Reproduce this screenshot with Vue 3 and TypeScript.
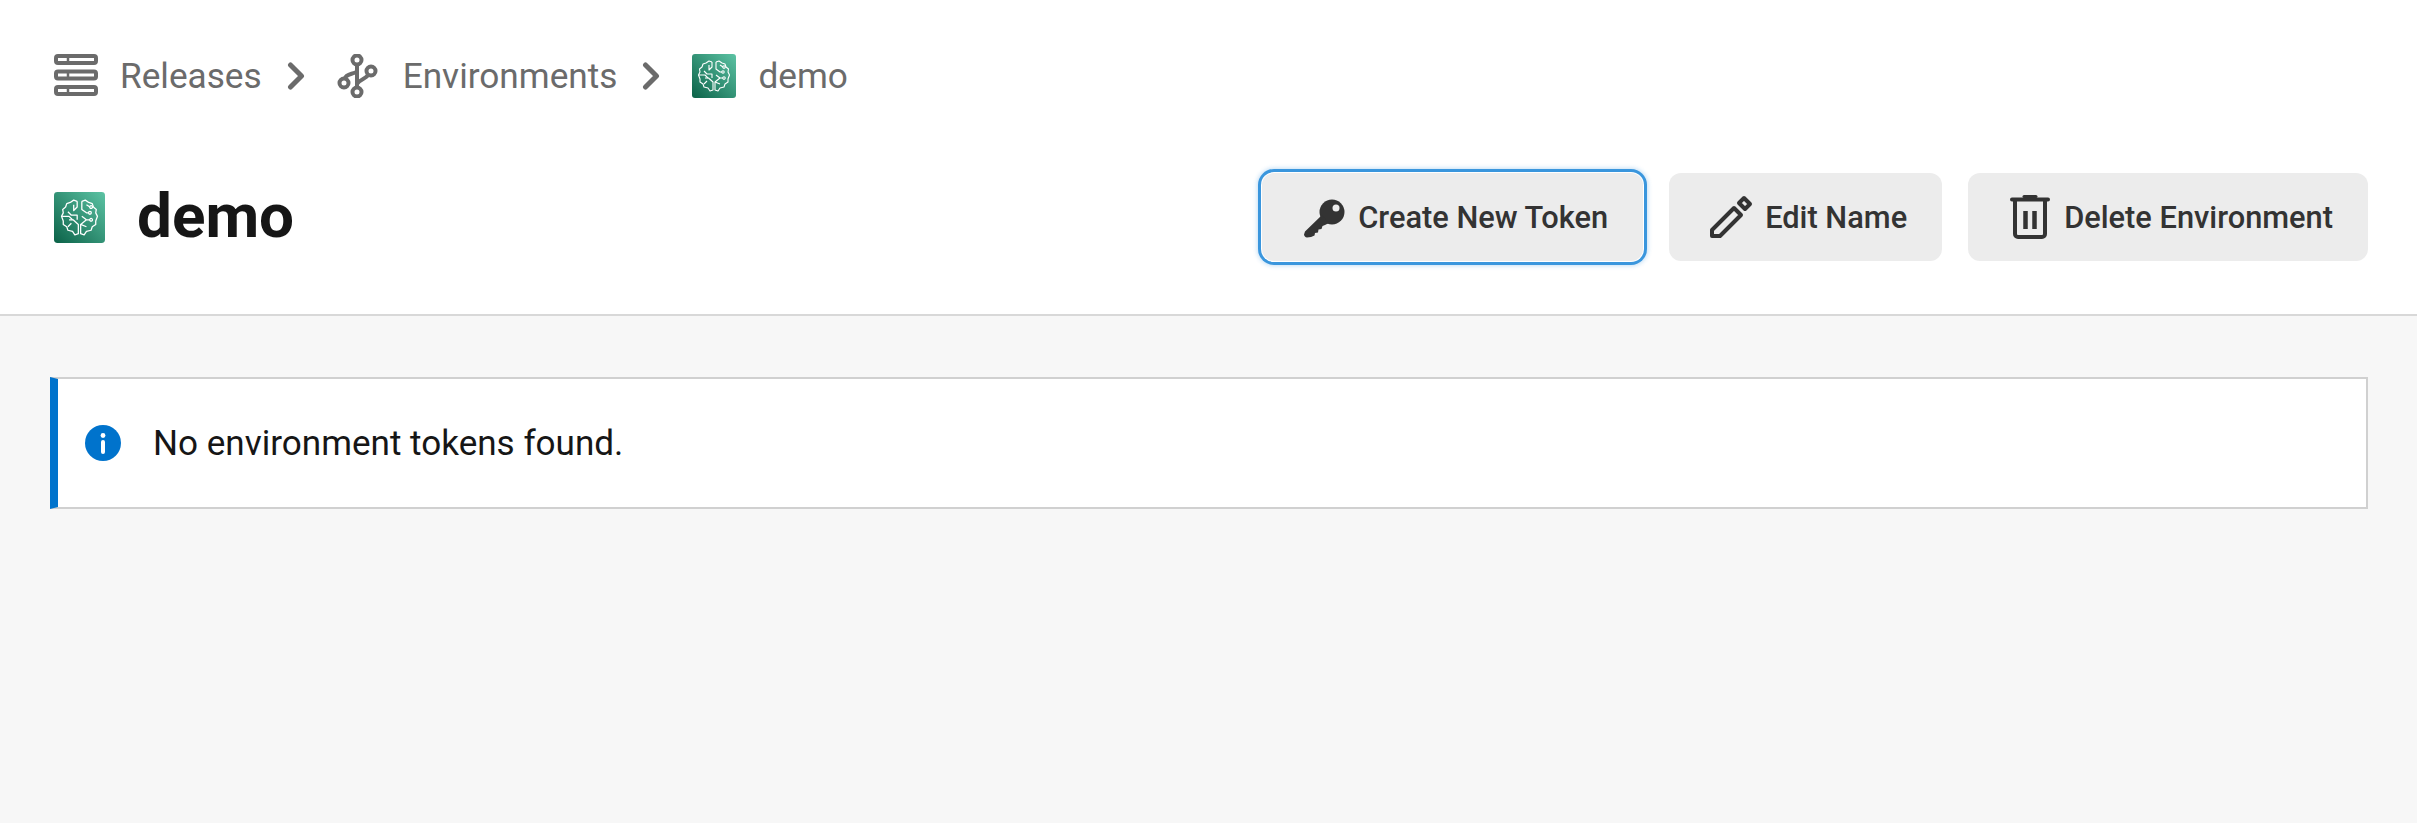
<template>
  <div class="page">
    <header class="head">
      <nav class="crumbs">
        <svg class="crumb-icon" viewBox="0 0 44 44" fill="none" stroke="#6b6b6b" stroke-width="4">
          <rect x="2" y="2" width="40" height="7" rx="2" />
          <rect x="2" y="17.500" width="40" height="7" rx="2" />
          <rect x="2" y="33" width="40" height="7" rx="2" />
          <path d="M14 3v5M14 18.500v5M14 34v5" stroke-width="2.500" />
        </svg>
        <span class="crumb-text">Releases</span>
        <svg class="chevron" viewBox="0 0 18 28" fill="none" stroke="#6b6b6b" stroke-width="5" stroke-linecap="round" stroke-linejoin="round">
          <path d="M3.500 3l11 11-11 11" />
        </svg>
        <svg class="crumb-icon" viewBox="0 0 44 44" fill="none" stroke="#6b6b6b" stroke-width="4">
          <circle cx="20" cy="6" r="4.500" />
          <circle cx="34" cy="17" r="4.500" />
          <circle cx="7" cy="29" r="4.500" />
          <circle cx="20" cy="38" r="4.500" />
          <path d="M20 10.500v23M31 21c-2 4-8 4-11 9M8 24.500c1-5 8-4 12-7" />
        </svg>
        <span class="crumb-text">Environments</span>
        <svg class="chevron" viewBox="0 0 18 28" fill="none" stroke="#6b6b6b" stroke-width="5" stroke-linecap="round" stroke-linejoin="round">
          <path d="M3.500 3l11 11-11 11" />
        </svg>
        <svg class="brain small" viewBox="0 0 44 44">
          <defs>
            <linearGradient id="brainBg" x1="0" y1="1" x2="1" y2="0">
              <stop offset="0" stop-color="#0b6248" />
              <stop offset="1" stop-color="#5cc3a4" />
            </linearGradient>
          </defs>
          <rect width="44" height="44" rx="3" fill="url(#brainBg)" />
          <path v-for="d in brainPaths" :key="d" :d="d" fill="none" stroke="#fff" stroke-width="1.100" stroke-linejoin="round" />
        </svg>
        <span class="crumb-text">demo</span>
      </nav>
      <div class="title-row">
        <div class="title">
          <svg class="brain" viewBox="0 0 44 44">
            <rect width="44" height="44" rx="3" fill="url(#brainBg)" />
            <path v-for="d in brainPaths" :key="d" :d="d" fill="none" stroke="#fff" stroke-width="1.100" stroke-linejoin="round" />
          </svg>
          <h1>demo</h1>
        </div>
        <div class="actions">
          <button class="btn focused" type="button">
            <svg class="btn-icon" viewBox="0 0 44 44">
              <g transform="translate(0 2)">
                <circle cx="30" cy="15" r="12.500" fill="#333" />
                <path fill="#333" d="M20 18l7 8-4 2-2.500 1-1 3-3 .5-.5 3-3 .5-.5 2.500-3.500 1.500-4 .5c-1.500 0-3-1.500-3-3l1-3z" />
                <circle cx="34" cy="11" r="3.500" fill="#ececec" />
              </g>
            </svg>
            Create New Token
          </button>
          <button class="btn" type="button">
            <svg class="btn-icon" viewBox="0 0 44 44" fill="none" stroke="#333" stroke-width="4" stroke-linejoin="round">
              <path d="M3 35L25 13l7 7-21 21H3z" />
              <path d="M35 3l6 6-5 5-6-6z" />
            </svg>
            Edit Name
          </button>
          <button class="btn" type="button">
            <svg class="btn-icon" viewBox="0 0 44 44" fill="none" stroke="#333" stroke-width="4" stroke-linecap="round" stroke-linejoin="round">
              <path d="M16 1.500h12" stroke-width="3" />
              <path d="M4 4.500h36M7 6v33a3 3 0 0 0 3 3h24a3 3 0 0 0 3-3V6" />
              <path d="M17.500 16v18M26.500 16v18" stroke-width="4.500" stroke-linecap="butt" />
            </svg>
            Delete Environment
          </button>
        </div>
      </div>
    </header>
    <main class="content">
      <div class="alert">
        <svg class="info" viewBox="0 0 36 36">
          <circle cx="18" cy="18" r="18" fill="#0073cc" />
          <circle cx="18" cy="10.500" r="2.400" fill="#fff" />
          <rect x="16" y="15" width="4" height="14" rx="2" fill="#fff" />
        </svg>
        <span>{{ message }}</span>
      </div>
    </main>
  </div>
</template>

<script setup lang="ts">
const message = 'No environment tokens found.'

// Контуры значка с мозгом
const brainPaths: string[] = [
  'M20 8l-3-1-3 2-3 1-1 3-2.500 2 .5 3-1.500 3 1.500 4v3l3 2 1 3 4 1 2 3 3-1v-8l-4.500-4H13',
  'M24 8l3-1 3 2 3 1 1 3 2.500 2-.5 3 1.500 3-1.500 4v3l-3 2-1 3-4 1-2 3-3-1v-8l5-4h3',
  'M20 8v5l-3 3v-5M7 21h6l3 3M12 17l3 3h5v4M12 30l3-3',
  'M24 8v7l4 3h2M24 21l4 3M28 11l3 2M28 30l-5-2',
  'M32.200 18a1.200 1.200 0 1 1-2.400 0 1.200 1.200 0 1 1 2.400 0zM33.200 24a1.200 1.200 0 1 1-2.400 0 1.200 1.200 0 1 1 2.400 0zM33.200 13a1.200 1.200 0 1 1-2.400 0 1.200 1.200 0 1 1 2.400 0z',
]
</script>

<style scoped>
.page {
  min-height: 823px;
  display: flex;
  flex-direction: column;
  background-color: #f7f7f7;
  font-family: Roboto, "Liberation Sans", sans-serif;
}

.head {
  background-color: #fff;
  border-bottom: 2px solid #d8d8d8;
  padding: 54px 49px 0 54px;
  box-sizing: border-box;
  height: 316px;
}

.crumbs {
  display: flex;
  align-items: center;
  height: 44px;
  color: #6b6b6b;
  font-size: 35.200px;
}

.crumb-icon {
  width: 44px;
  height: 44px;
  margin-right: 22px;
}

.chevron {
  width: 18px;
  height: 28px;
  margin: 0 32px 0 25px;
}

.brain {
  width: 51px;
  height: 51px;
  flex-shrink: 0;
}

.brain.small {
  width: 44px;
  height: 44px;
  margin-right: 22px;
}

.title-row {
  display: flex;
  align-items: center;
  justify-content: space-between;
  margin-top: 75px;
}

.title {
  display: flex;
  align-items: center;
  gap: 32px;
}

h1 {
  margin: -2px 0 0;
  font-size: 62px;
  font-weight: 700;
  color: #161616;
  line-height: 1;
}

.actions {
  display: flex;
  align-items: center;
  gap: 26px;
}

.btn {
  display: flex;
  align-items: center;
  gap: 12px;
  height: 88px;
  padding: 0 35px 0 40px;
  border: none;
  border-radius: 12px;
  background-color: #ececec;
  color: #333;
  font-family: inherit;
  font-size: 30.800px;
  font-weight: 500;
}

.btn.focused {
  box-shadow: 0 0 0 1px #fff, 0 0 0 4px #3a96dd, 0 0 4px 5px rgba(58, 150, 221, 0.3);
}

.btn-icon {
  width: 44px;
  height: 44px;
}

.content {
  padding: 61px 49px 0 50px;
}

.alert {
  display: flex;
  align-items: center;
  gap: 32px;
  height: 132px;
  box-sizing: border-box;
  padding-left: 27px;
  background-color: #fff;
  border: 2px solid #d0d0d0;
  border-left: 8px solid #0073cc;
  color: #161616;
  font-size: 35.100px;
}

.info {
  width: 36px;
  height: 36px;
}
</style>
